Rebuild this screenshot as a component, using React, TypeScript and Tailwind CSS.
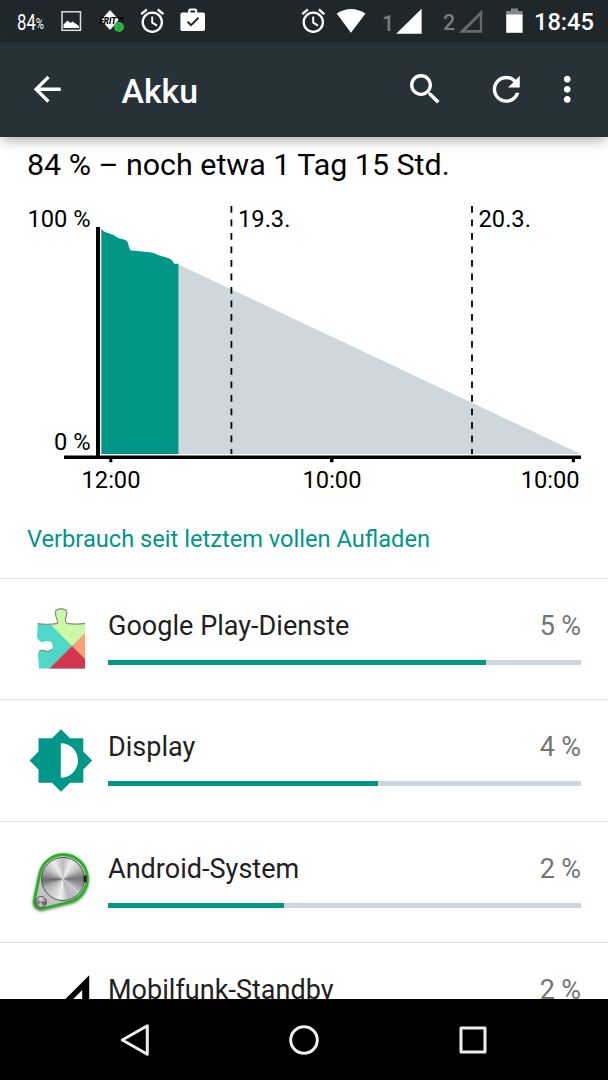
import type { ReactNode } from 'react'

type Consumer = {
  name: string
  percent: number
  fill: number
  icon: ReactNode
}

const PlayServicesIcon = () => (
  <svg viewBox="0 0 64 64" className="size-16">
    <clipPath id="puzzle">
      <path d="M8.7 15.6 Q19 17 28.3 15.4 Q29 12 27.3 9.5 Q25.6 5 27 2.2 Q32 -.6 37 2.2 Q38.8 5 36.8 9.5 Q35.5 13 38 15.4 Q47 17 56 15.4 V60.5 H10 L9 46 Q10 42 14.5 42 Q16.5 43.8 19.3 43.2 Q23.8 42 23.8 38 Q23.8 33.6 19.3 33 Q16 32.6 14 34.2 Q9.5 34 8 29 Z" />
    </clipPath>
    <g clipPath="url(#puzzle)">
      <path fill="#4fd8c8" d="M0 0H64V64H0Z" />
      <path fill="#ccf7a5" d="M5 0H64V18L43 38Z" />
      <path fill="#ffa175" d="M43 38 64 17V60Z" />
      <path fill="#d4364f" d="M43 38 64 59V64H17Z" />
    </g>
    <path
      d="M8.7 15.6 Q19 17 28.3 15.4 Q29 12 27.3 9.5 Q25.6 5 27 2.2 Q32 -.6 37 2.2 Q38.8 5 36.8 9.5 Q35.5 13 38 15.4 Q47 17 56 15.4 M10 44 Q11 42 14.5 42 Q16.5 43.8 19.3 43.2 Q22 42.5 23 41"
      fill="none"
      stroke="#888"
      strokeWidth="1.2"
    />
  </svg>
)

const DisplayIcon = () => (
  <svg viewBox="0 0 64 64" className="size-16">
    <path
      fill="#009688"
      d="M54.3 40.5 63.2 31.5 54.3 22.5V9.2H41L32 .3 23 9.2H9.5V22.5L.6 31.5 9.5 40.5V53.8H23L32 62.7 41 53.8H54.3Z"
    />
    <path fill="#fff" d="M31.8 48.7V14.3A17.2 17.2 0 0 1 31.8 48.7Z" />
  </svg>
)

const SystemIcon = () => (
  <svg viewBox="0 0 64 64" className="size-16 overflow-visible">
    <path
      d="M10.8 24A24 24 0 1 1 40.1 52L14 58.5A7 7 0 0 1 5.4 50.3Z"
      fill="#c4c4c4"
      stroke="#22b522"
      strokeWidth="2.8"
      className="drop-shadow-[0_1.5px_1.5px_rgba(0,0,0,0.6)]"
    />
    <foreignObject x="12" y="7" width="44" height="44">
      <div className="size-11 rounded-full border border-[#555] bg-[conic-gradient(#bbb,#eee_7%,#c4c4c4_15%,#777_24%,#888_28%,#c9c9c9_36%,#b5b5b5_45%,#f0f0f0_52%,#cfcfcf_60%,#b0b0b0_68%,#6a6a6a_74%,#999_79%,#c5c5c5_85%,#ececec_92%,#bbb)]" />
    </foreignObject>
    <path d="M54.5 26 57.6 25V33L54.5 31.5Z" fill="#222" />
    <foreignObject x="6" y="45.5" width="12" height="12">
      <div className="size-3 rounded-full border border-[#555] bg-[conic-gradient(#ddd,#888_25%,#555_30%,#ccc_50%,#777_72%,#ddd)]" />
    </foreignObject>
  </svg>
)

const CellStandbyIcon = () => (
  <svg viewBox="0 0 64 64" className="size-16">
    <path fillRule="evenodd" d="M60.2 3.2V60.5H3ZM53.2 18V53.5H18Z" />
  </svg>
)

const consumers: Consumer[] = [
  { name: 'Google Play-Dienste', percent: 5, fill: 80, icon: <PlayServicesIcon /> },
  { name: 'Display', percent: 4, fill: 57.1, icon: <DisplayIcon /> },
  { name: 'Android-System', percent: 2, fill: 37.2, icon: <SystemIcon /> },
  { name: 'Mobilfunk-Standby', percent: 2, fill: 34, icon: <CellStandbyIcon /> },
]

const AlarmIcon = ({ className }: { className?: string }) => (
  <svg viewBox="0 0 25 26" className={`h-[26px] w-[25px] shrink-0 ${className}`}>
    <g fill="none" stroke="#fff">
      <circle cx="12.3" cy="14.2" r="9.6" strokeWidth="2.3" />
      <path d="M1.2 6.2 6.8 1.5M23.4 6.2 17.8 1.5" strokeWidth="2.4" />
      <path d="M12.2 8.5V14.6L17 17.6" strokeWidth="1.9" />
    </g>
  </svg>
)

const StatusBar = () => (
  <div className="flex h-[42px] items-start bg-[#20272b] pt-2 pl-[17px]">
    <svg viewBox="0 0 28 26" className="h-[26px] w-7 shrink-0 overflow-visible fill-white">
      <text y="21.8" fontSize="22.5" textLength="27" lengthAdjust="spacingAndGlyphs">
        84<tspan fontSize="15" dy="-1">%</tspan>
      </text>
    </svg>
    <svg viewBox="0 0 21 26" className="ml-4 h-[26px] w-[21px] shrink-0">
      <rect x="1" y="3.8" width="18.5" height="18.5" fill="none" stroke="#ddd" strokeWidth="1.5" />
      <path fill="#fff" d="M2.5 20V16.5L6.5 12.5 9.5 15 11.5 13.5 18 18V20Z" />
    </svg>
    <svg viewBox="0 0 28 26" className="ml-4 h-[26px] w-7 shrink-0">
      <path fill="#fff" d="M12 2 21 12 12 22 3 12Z" />
      <text
        x="1.5"
        y="15.5"
        fontSize="8.5"
        fontWeight="900"
        fontStyle="italic"
        textLength="24"
        lengthAdjust="spacingAndGlyphs"
      >
        FRITZ!
      </text>
      <circle cx="21" cy="19" r="5" fill="#2fb344" />
      <path stroke="#238c35" strokeWidth="1" d="M21 16V22" />
    </svg>
    <AlarmIcon className="ml-[14px]" />
    <svg viewBox="0 0 26 26" className="ml-[15px] h-[26px] w-[26px] shrink-0">
      <path
        fill="#fff"
        fillRule="evenodd"
        d="M8.2 4.5V2.4Q8.2 .4 10.2 .4H15.2Q17.2 .4 17.2 2.4V4.5H23.2Q25 4.5 25 6.3V21.3Q25 23.1 23.2 23.1H2.2Q.4 23.1 .4 21.3V6.3Q.4 4.5 2.2 4.5ZM10.4 4.5H15V2.6H10.4Z"
      />
      <path fill="none" stroke="#20272b" strokeWidth="2" d="M7.5 13.8 11 17.2 18.5 9.8" />
    </svg>
    <AlarmIcon className="ml-[95px]" />
    <svg viewBox="0 0 30 26" className="ml-[10px] h-[26px] w-[30px] shrink-0 fill-white">
      <path d="M.7 5.5Q14.8-3.5 29.5 5.5L15 24.8Z" />
    </svg>
    <span className="ml-4 w-[14px] pt-[3px] text-[21.5px] leading-[26px] font-medium text-[#777c7e]">1</span>
    <svg viewBox="0 0 26 26" className="h-[26px] w-[26px] shrink-0 fill-white">
      <path d="M25.6 .8V25.8H.2Z" />
    </svg>
    <span className="ml-[21px] w-[15px] pt-[2px] text-[21.5px] leading-[26px] font-medium text-[#777c7e]">2</span>
    <svg viewBox="0 0 26 26" className="h-[26px] w-[26px] shrink-0">
      <path fill="#63686b" fillRule="evenodd" d="M24.2 1.5V24.8H.8ZM21.8 8V22H8Z" />
    </svg>
    <svg viewBox="0 0 17 26" className="ml-[22px] h-[26px] w-[17px] shrink-0">
      <path fill="#84888a" d="M5 .6H12V3H16.6V8H.2V3H5Z" />
      <path fill="#fff" d="M.2 6.5H16.6V24.8H.2Z" />
    </svg>
    <span className="ml-[11px] pt-[1px] text-[23.6px] leading-[26px] font-medium text-white">18:45</span>
  </div>
)

const ActionBar = () => (
  <header className="relative z-10 flex h-[95px] items-start bg-[#263238] pt-[27px] pl-[27px] text-white shadow-[0_6px_12px_-3px_rgba(0,0,0,0.35)]">
    <svg viewBox="0 0 24 24" className="size-[40.5px] fill-current">
      <path d="M20 11H7.83l5.59-5.59L12 4l-8 8 8 8 1.41-1.41L7.83 13H20v-2z" />
    </svg>
    <h1 className="ml-[54px] w-[283.5px] pt-[3px] text-[33.8px] leading-10 font-medium">Akku</h1>
    <svg viewBox="0 0 24 24" className="size-[40.5px] fill-current">
      <path d="M15.5 14h-.79l-.28-.27C15.41 12.59 16 11.11 16 9.5 16 5.91 13.09 3 9.5 3S3 5.91 3 9.5 5.91 16 9.5 16c1.61 0 3.09-.59 4.23-1.57l.27.28v.79l5 4.99L20.49 19l-4.99-5zm-6 0C7.01 14 5 11.99 5 9.5S7.01 5 9.5 5 14 7.01 14 9.5 11.99 14 9.5 14z" />
    </svg>
    <svg viewBox="0 0 24 24" className="ml-[40.5px] size-[40.5px] fill-current">
      <path d="M17.65 6.35C16.2 4.9 14.21 4 12 4c-4.42 0-7.99 3.58-7.99 8s3.57 8 7.99 8c3.73 0 6.84-2.55 7.73-6h-2.08c-.82 2.33-3.04 4-5.65 4-3.31 0-6-2.69-6-6s2.69-6 6-6c1.66 0 3.14.69 4.22 1.78L13 11h7V4l-2.35 2.35z" />
    </svg>
    <svg viewBox="0 0 24 24" className="ml-[20.5px] size-[40.5px] fill-current">
      <path d="M12 8c1.1 0 2-.9 2-2s-.9-2-2-2-2 .9-2 2 .9 2 2 2zm0 2c-1.1 0-2 .9-2 2s.9 2 2 2 2-.9 2-2-.9-2-2-2zm0 6c-1.1 0-2 .9-2 2s.9 2 2 2 2-.9 2-2-.9-2-2-2z" />
    </svg>
  </header>
)

const BatteryChart = () => (
  <svg viewBox="0 0 608 320" className="h-[320px] w-[608px] shrink-0" fontSize="23.7">
    <path fill="#ced7dc" d="M178 74.3 580.5 264H178Z" />
    <path
      fill="#009688"
      d="M101.3 264V38.5Q102.5 41 105 42L114 45.3 118 48 124 49.6Q128 51 128.5 55 129.5 60 131 60.5L150 62.2Q155 63 158 65L168 68Q173 70 174 73.8H178.4V264Z"
    />
    <path d="M96 37H100V265.6H581V269H64V265.6H96Z" />
    <path d="M109.3 268H112.3V272.3H109.3ZM330 268H333.5V272.3H330ZM571.8 268H575V272.3H571.8Z" />
    <path stroke="#000" strokeWidth="1.8" strokeDasharray="6.75 6.75" d="M231.4 16V264M472 16V264" />
    <text x="90.6" y="37" textAnchor="end">100 %</text>
    <text x="90.6" y="260.4" textAnchor="end">0 %</text>
    <text x="238" y="37">19.3.</text>
    <text x="478.5" y="37">20.3.</text>
    <text x="111" y="298.4" textAnchor="middle">12:00</text>
    <text x="332" y="298.4" textAnchor="middle">10:00</text>
    <text x="579.7" y="298.4" textAnchor="end">10:00</text>
  </svg>
)

const ConsumerRow = ({ name, percent, fill, icon }: Consumer) => (
  <li className="flex h-[121.35px] shrink-0 gap-[15px] border-t border-[#e2e2e2] pt-7 pr-[27px] pl-[29px]">
    <div className="w-16 shrink-0 pt-[0.6px]">{icon}</div>
    <div className="flex-1">
      <div className="flex justify-between text-[27px] leading-8">
        <span className="pt-[3px] tracking-[0.03px] text-[#212121]">{name}</span>
        <span className="pt-[3px] tracking-[-0.1px] text-[#757575]">{percent} %</span>
      </div>
      <div className="mt-[18px] h-[5px] bg-[#ced7dc]">
        <div className="h-full bg-[#009688]" style={{ width: `${fill}%` }} />
      </div>
    </div>
  </li>
)

const NavBar = () => (
  <nav className="flex h-[81px] shrink-0 items-center justify-center gap-[129px] bg-black">
    <svg viewBox="0 0 40 40" className="size-10" fill="none" stroke="#eee" strokeWidth="3" strokeLinejoin="round">
      <path d="M7.3 20 32.3 5.8V34.2Z" />
    </svg>
    <svg viewBox="0 0 40 40" className="size-10" fill="none" stroke="#eee" strokeWidth="3">
      <circle cx="20" cy="20" r="13.3" />
    </svg>
    <svg viewBox="0 0 40 40" className="size-10" fill="none" stroke="#eee" strokeWidth="3" strokeLinejoin="round">
      <path d="M8 8H32V32H8Z" />
    </svg>
  </nav>
)

export default function App() {
  return (
    <div className="flex h-[1080px] w-[608px] flex-col overflow-hidden bg-white font-['Roboto',sans-serif] text-black">
      <StatusBar />
      <ActionBar />
      <main className="flex min-h-0 flex-1 flex-col overflow-hidden">
        <h2 className="h-[53px] shrink-0 pt-[10px] pl-[27px] text-[30.4px] leading-9">
          84 % – noch etwa 1 Tag 15 Std.
        </h2>
        <BatteryChart />
        <h3 className="h-[68px] shrink-0 pt-[15px] pl-[27px] text-[23.65px] leading-7 text-[#009688]">
          Verbrauch seit letztem vollen Aufladen
        </h3>
        <ul className="shrink-0">
          {consumers.map(consumer => (
            <ConsumerRow key={consumer.name} {...consumer} />
          ))}
        </ul>
      </main>
      <NavBar />
    </div>
  )
}
